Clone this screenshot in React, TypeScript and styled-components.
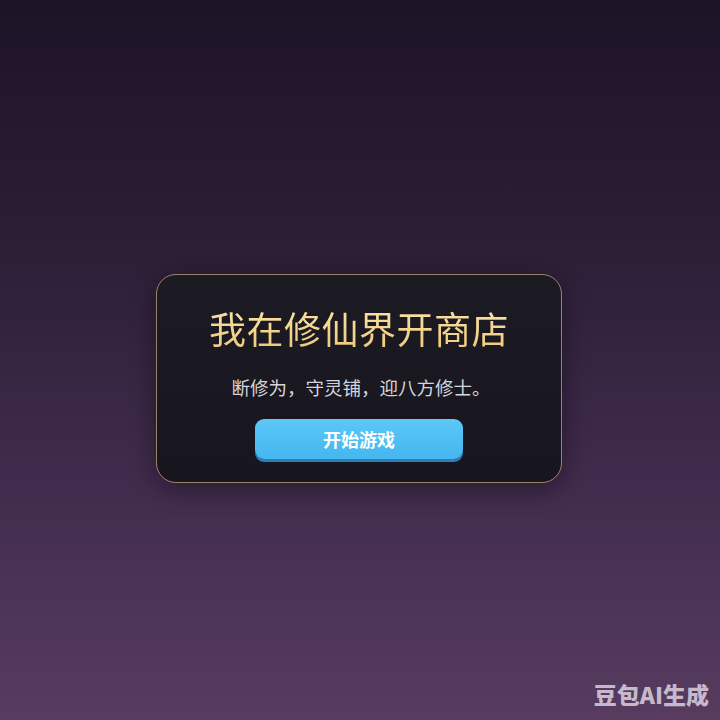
import React from "react";
import styled, { createGlobalStyle } from "styled-components";

const GlobalStyle = createGlobalStyle`
  html, body {
    margin: 0;
    padding: 0;
  }
  body {
    font-family: "Noto Sans CJK SC", "Noto Sans", sans-serif;
  }
`;

const Page = styled.div`
  box-sizing: border-box;
  width: 720px;
  height: 720px;
  padding-top: 37px;
  display: flex;
  align-items: center;
  justify-content: center;
  position: relative;
  overflow: hidden;
  background: linear-gradient(180deg, #1d1327 0%, #2c1f36 35%, #3f2b4b 65%, #573c5f 100%);
`;

const Card = styled.div`
  box-sizing: border-box;
  width: 406px;
  height: 209px;
  margin-left: -2px;
  padding: 31px 0 22px;
  display: flex;
  flex-direction: column;
  align-items: center;
  border-radius: 20px;
  border: 1px solid #9a8468;
  background: linear-gradient(180deg, #1c1b24 0%, #17161e 100%);
  box-shadow: 0 6px 24px rgba(10, 5, 15, 0.45);
`;

const Title = styled.h1`
  margin: 0;
  font-size: 37px;
  line-height: 44px;
  font-weight: 400;
  letter-spacing: 0.5px;
  color: #f4d48e;
  background: linear-gradient(180deg, #fbe3a6 0%, #eec97c 100%);
  -webkit-background-clip: text;
  background-clip: text;
  -webkit-text-fill-color: transparent;
`;

const Subtitle = styled.p`
  margin: 24px 0 0;
  font-size: 18.5px;
  line-height: 26px;
  color: #d6d4dc;
  padding-left: 4px;
`;

const StartButton = styled.button`
  margin-top: 19px;
  width: 208px;
  height: 40px;
  border: none;
  border-radius: 9px;
  background: linear-gradient(180deg, #5cc8f8 0%, #45b6ef 100%);
  box-shadow: 0 3px 0 #2a7fb8;
  color: #ffffff;
  font-family: "Noto Sans CJK SC", sans-serif;
  font-size: 18px;
  font-weight: 700;
  cursor: pointer;
`;

const Watermark = styled.div`
  position: absolute;
  right: 11px;
  bottom: 12px;
  font-size: 23px;
  line-height: 28px;
  font-weight: 900;
  color: rgba(225, 215, 230, 0.82);
`;

export default function App() {
  return (
    <>
      <GlobalStyle />
      <Page>
        <Card>
          <Title>我在修仙界开商店</Title>
          <Subtitle>断修为，守灵铺，迎八方修士。</Subtitle>
          <StartButton>开始游戏</StartButton>
        </Card>
        <Watermark>豆包AI生成</Watermark>
      </Page>
    </>
  );
}
